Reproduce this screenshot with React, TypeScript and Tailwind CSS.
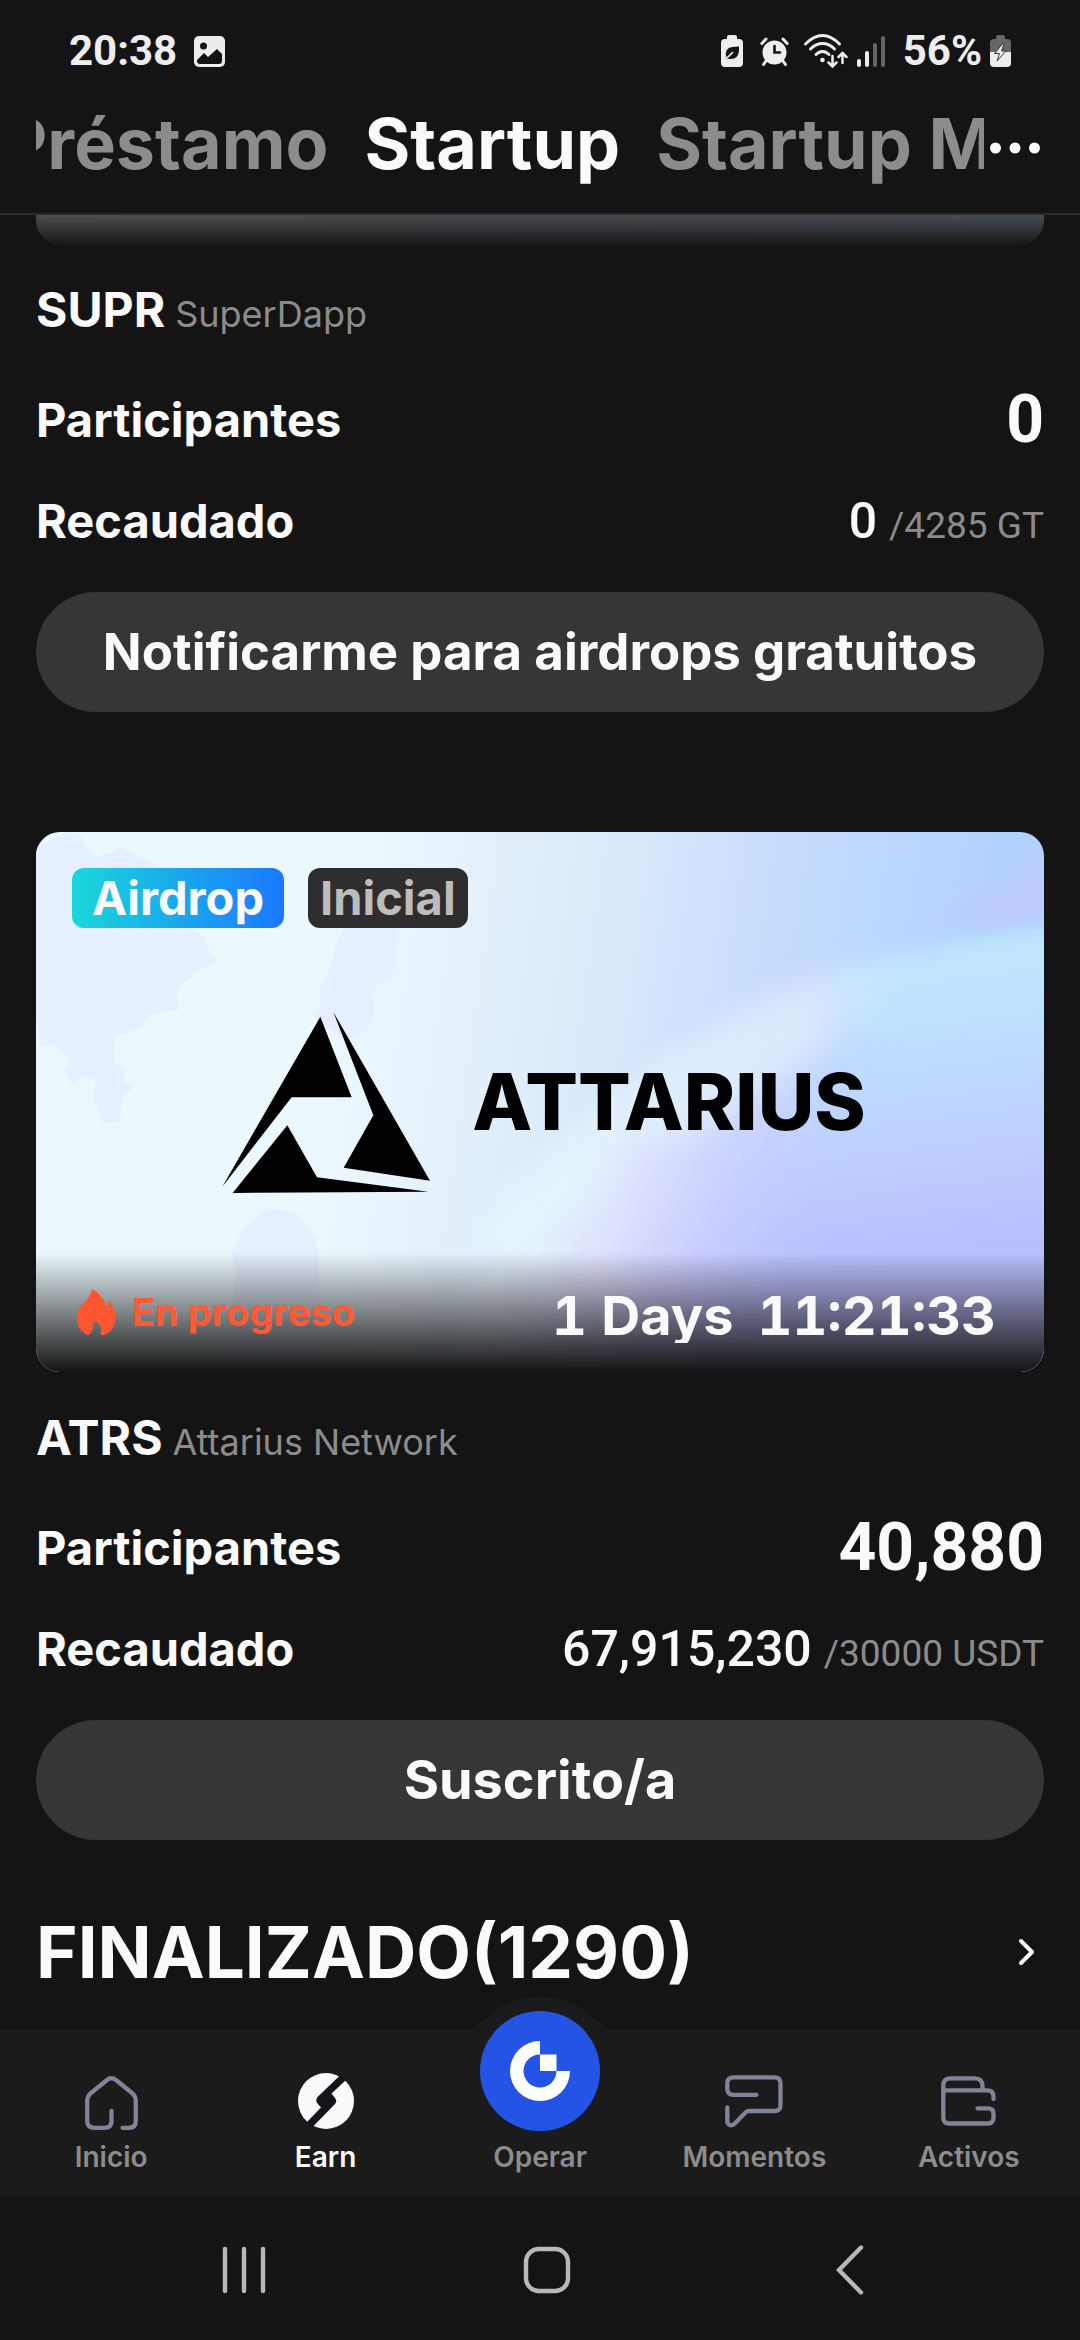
import React from "react";

function StatusBar() {
  return (
    <div className="flex h-[102px] items-center justify-between pl-[69px] pr-[69px] text-[#ededed]">
      <div className="flex items-center gap-[17px]">
        <span className="font-['Roboto',sans-serif] text-[42px] leading-[48px] font-bold">20:38</span>
        <svg width="31" height="31" viewBox="0 0 31 31" aria-hidden="true">
          <rect width="31" height="31" rx="5" fill="#ededed" />
          <circle cx="9.500" cy="10" r="3.500" fill="#141414" />
          <path d="M3 24 10 17 14 21 23 13 28 18V25Q28 28 25 28H6Q3 28 3 25Z" fill="#141414" />
        </svg>
      </div>
      <div className="flex items-center">
        <svg width="22" height="32" viewBox="0 0 22 32" aria-hidden="true">
          <path d="M6 4V2Q6 0 8 0H14Q16 0 16 2V4H18Q22 4 22 8V28Q22 32 18 32H4Q0 32 0 28V8Q0 4 4 4Z" fill="#ededed" />
          <path d="M5 22Q3.500 13 11 12L18 11.500V16Q17 24 10 24Q7 24 5.500 23L3 25" fill="#141414" />
          <path d="M3 24Q8 22 12 17" stroke="#ededed" strokeWidth="1.600" fill="none" />
        </svg>
        <svg className="ml-[17px]" width="29" height="29" viewBox="0 0 29 29" fill="none" stroke="#ededed" strokeWidth="3" strokeLinecap="round" aria-hidden="true">
          <circle cx="14.500" cy="15.500" r="12" fill="#ededed" stroke="none" />
          <path d="M1.800 6.500 6 2M27.200 6.500 23 2M6 24 3.500 27.500M23 24 25.500 27.500" />
          <path d="M14.500 9V15.500H20" stroke="#141414" strokeWidth="2.600" />
        </svg>
        <svg className="ml-[15px]" width="44" height="34" viewBox="0 0 44 34" fill="none" stroke="#ededed" strokeWidth="2.900" strokeLinecap="round" aria-hidden="true">
          <path d="M1.500 10Q10 1.500 18.500 1.500T35.500 10M6.500 15Q12 9.500 18.500 9.500T30.500 15M12 20.500Q15 17.500 18.500 17.500T25 20.500" />
          <circle cx="18.500" cy="26" r="2.300" fill="#ededed" stroke="none" />
          <path d="M28.500 22V32M24.500 28.500 28.500 32.500 32.500 28.500M38.500 29V20M34.500 23 38.500 19 42.500 23" strokeWidth="2.500" />
        </svg>
        <svg className="ml-[9px]" width="28" height="31" viewBox="0 0 28 31" aria-hidden="true">
          <rect x="0" y="23" width="4" height="8" rx="2" fill="#ededed" />
          <rect x="8" y="15" width="4" height="16" rx="2" fill="#ededed" />
          <rect x="16" y="7" width="4" height="24" rx="2" fill="#666666" />
          <rect x="24" y="0" width="4" height="31" rx="2" fill="#666666" />
        </svg>
        <span className="ml-[18px] font-['Roboto',sans-serif] text-[42px] leading-[48px] font-bold">56%</span>
        <svg className="ml-[8px]" width="21" height="32" viewBox="0 0 21 32" aria-hidden="true">
          <path d="M6 4V2Q6 0 8 0H13Q15 0 15 2V4H17Q21 4 21 8V17H0V8Q0 4 4 4Z" fill="#666666" />
          <path d="M0 17H21V28Q21 32 17 32H4Q0 32 0 28Z" fill="#ededed" />
          <path d="M12.500 9 4.500 18.500H9.500L7 26 16 16H11.500L14 9Z" fill="#ededed" stroke="#3a3a3a" strokeWidth="1" />
        </svg>
      </div>
    </div>
  );
}

function Header() {
  return (
    <header className="border-b-2 border-[#2a2a2b]">
      <StatusBar />
      <div className="flex h-[111px] pr-10 pl-9">
        <nav className="flex h-[84px] min-w-0 flex-1 items-center gap-9 overflow-hidden text-[70px] leading-[84px] font-bold whitespace-nowrap text-[#8c8c8c]">
          <a href="#prestamo" className="-ml-[34px]">Préstamo</a>
          <a href="#startup" aria-current="page" className="text-[#fafafa]">Startup</a>
          <a href="#startup-mining">Startup Mining</a>
        </nav>
        <button type="button" aria-label="Más" className="flex h-[84px] w-[56px] items-center justify-end pt-2">
          <svg width="50" height="12" viewBox="0 0 50 12" fill="#fafafa" aria-hidden="true">
            <circle cx="5.500" cy="6" r="5.500" />
            <circle cx="25" cy="6" r="5.500" />
            <circle cx="44.500" cy="6" r="5.500" />
          </svg>
        </button>
      </div>
    </header>
  );
}

function BannerArt() {
  return (
    <svg className="absolute inset-0 h-full w-full" viewBox="0 0 1008 540" preserveAspectRatio="none" aria-hidden="true">
      <defs>
        <linearGradient id="sky" gradientUnits="userSpaceOnUse" x1="290" y1="140" x2="930" y2="230">
          <stop offset="0" stopColor="#ebf8fd" />
          <stop offset="0.200" stopColor="#e6f2fb" />
          <stop offset="0.420" stopColor="#d9eafa" />
          <stop offset="0.620" stopColor="#cbdffd" />
          <stop offset="0.820" stopColor="#bdd8fe" />
          <stop offset="1" stopColor="#b1d2fd" />
        </linearGradient>
        <linearGradient id="sheet" gradientUnits="userSpaceOnUse" x1="820" y1="110" x2="860" y2="430">
          <stop offset="0" stopColor="#c0e6ff" />
          <stop offset="0.250" stopColor="#bfe3ff" />
          <stop offset="0.500" stopColor="#bdd7fe" />
          <stop offset="0.750" stopColor="#bccbfe" />
          <stop offset="1" stopColor="#babfff" />
        </linearGradient>
        <linearGradient id="sheen" gradientUnits="userSpaceOnUse" x1="520" y1="300" x2="780" y2="400">
          <stop offset="0" stopColor="#e6f2fd" />
          <stop offset="0.350" stopColor="#dfe3fd" stopOpacity="0.900" />
          <stop offset="0.650" stopColor="#d2d2fe" stopOpacity="0.600" />
          <stop offset="1" stopColor="#c5ccfe" stopOpacity="0" />
        </linearGradient>
        <linearGradient id="edge" gradientUnits="userSpaceOnUse" x1="600" y1="200" x2="880" y2="190">
          <stop offset="0" stopColor="#dfeffb" />
          <stop offset="0.600" stopColor="#dae9fc" />
          <stop offset="1" stopColor="#c8e4fe" stopOpacity="0" />
        </linearGradient>
        <filter id="soft" x="-10%" y="-10%" width="120%" height="120%">
          <feGaussianBlur stdDeviation="9" />
        </filter>
        <filter id="softer" x="-30%" y="-30%" width="160%" height="160%">
          <feGaussianBlur stdDeviation="14" />
        </filter>
      </defs>
      <rect width="1008" height="540" fill="url(#sky)" />
      <g fill="#e6effe">
        <path d="M0 15 14 9 33 0 44 3 50 14 60 24 72 22 84 15 98 22 115 30 135 60 152 92 168 105 172 118 183 130 165 137 146 152 140 165 143 178 126 180 112 185 104 196 81 204 77 218 79 230 90 238 88 250 97 255 86 266 84 289 67 291 62 275 57 267 60 248 50 244 36 252 28 240 34 228 29 222 18 212 5 215 0 185Z" />
        <path d="M312 90H362L360 120 358 141 336 159 338 176 334 196 312 207 292 196 276 182 284 176 284 156 295 133 300 112Z" />
        <path d="M232 376 260 381 281 407 288 540H191L200 440 196 420 208 396Z" />
      </g>
      <path d="M400 540 420 440Q440 390 504 330 570 270 650 215L600 350 560 540Z" fill="#e4f1fd" filter="url(#soft)" />
      <path d="M1040 10 1008 26 905 92 1040 96Z" fill="#bccbfe" filter="url(#soft)" />
      <g filter="url(#soft)">
        <path d="M1060 92Q800 112 640 225 510 320 430 470V600H1060Z" fill="url(#sheet)" />
        <path d="M780 132Q700 170 640 225 510 320 430 470V600H900V300Z" fill="url(#sheen)" />
      </g>
      <path d="M880 112Q740 150 620 240L560 295 640 305Q750 255 840 170Z" fill="url(#edge)" filter="url(#softer)" />
      <path d="M430 400Q500 330 600 270L560 360 480 440Z" fill="#e4f3fc" filter="url(#softer)" />
    </svg>
  );
}

function Flame() {
  return (
    <svg width="40" height="46" viewBox="0 0 40 46" fill="#ff5530" aria-hidden="true">
      <path d="M16 0Q26 5 31 18Q33 15 33 11Q39 19 39.500 28Q39.500 41 29 45.500Q25 46.500 24.500 45.500Q27 36 19 32Q16.500 34 17 39Q15.500 44 13 46Q8 45.500 3.500 39Q0 33 1 26Q3 18 10 12Q15 6 16 0Z" />
    </svg>
  );
}

function Banner() {
  return (
    <div className="relative h-[540px] overflow-hidden rounded-[24px]">
      <BannerArt />
      <div className="absolute inset-0 flex items-center justify-center gap-[42px] pl-2">
        <svg width="208" height="181" viewBox="64 38 622 543" aria-hidden="true">
          <path d="M358 52 452 294H272L64 562ZM397 38 687 544 428 505 517 348ZM259 378 348 534 682 577 95 581Z" />
        </svg>
        <span className="text-[78px] leading-[84px] font-extrabold text-black">ATTARIUS</span>
      </div>
      <div className="absolute inset-x-0 top-0 flex gap-6 p-9">
        <span className="rounded-[12px] bg-linear-to-r/srgb from-[#19d8da] to-[#1a78ff] px-5 text-[47px] leading-[60px] font-bold text-[#fafafa]">Airdrop</span>
        <span className="rounded-[12px] bg-[#2e2e2e] px-3 text-[47px] leading-[60px] font-bold text-[#bdbdbd]">Inicial</span>
      </div>
      <div className="absolute inset-x-0 bottom-0 flex h-[120px] items-center justify-between bg-linear-to-b from-transparent to-[#141414] pr-12 pl-10">
        <div className="flex items-center gap-4">
          <Flame />
          <span className="text-[38px] leading-[54px] font-bold text-[#ff5a36]">En progreso</span>
        </div>
        <div className="flex gap-6 pt-2 text-[54px] leading-[54px] font-bold text-[#fafafa] tabular-nums">
          <span className="overflow-hidden">1 Days</span>
          <span>11:21:33</span>
        </div>
      </div>
    </div>
  );
}

type ProjectProps = {
  symbol: string;
  name: string;
  participants: string;
  raised: string;
  goal: string;
  action: React.ReactNode;
};

function ProjectDetails({ symbol, name, participants, raised, goal, action }: ProjectProps) {
  return (
    <>
      <h2 className="mt-9 flex items-baseline gap-[10px] text-[48px] leading-[60px] font-bold">
        {symbol}
        <span className="text-[36px] leading-[40px] font-normal text-[#8c8c8c]">{name}</span>
      </h2>
      <dl className="flex flex-col">
        <div className="mt-[50px] flex h-[60px] items-center justify-between">
          <dt className="text-[47px] leading-[60px] font-bold">Participantes</dt>
          <dd className="font-['Roboto',sans-serif] text-[66px] leading-[60px] font-bold">{participants}</dd>
        </div>
        <div className="mt-[41px] flex items-baseline justify-between">
          <dt className="text-[47px] leading-[60px] font-bold">Recaudado</dt>
          <dd className="flex items-baseline gap-3 font-['Roboto',sans-serif] text-[50px] leading-[60px] font-medium">
            {raised}
            <span className="text-[37px] leading-[40px] font-normal text-[#8c8c8c]">{goal}</span>
          </dd>
        </div>
      </dl>
      {action}
    </>
  );
}

const pill = "mt-[41px] h-[120px] w-full rounded-full bg-[#353638] font-bold";

function NavItem({ label, active, children }: { label: string; active?: boolean; children: React.ReactNode }) {
  return (
    <a href={"#" + label.toLowerCase()} className={active ? "flex flex-col items-center pt-[41px] text-[#fafafa]" : "flex flex-col items-center pt-[41px] text-[#8c8c8c]"}>
      <span className="flex h-[60px] items-center justify-center">{children}</span>
      <span className="mt-2 text-[28px] leading-[36px] font-semibold">{label}</span>
    </a>
  );
}

const line = { fill: "none", stroke: "#7f8596", strokeWidth: 4.3, strokeLinecap: "round" as const, strokeLinejoin: "round" as const };

function BottomNav() {
  return (
    <nav className="grid h-[166px] grid-cols-5 items-start bg-[#1b1b1b] px-1">
      <NavItem label="Inicio">
        <svg className="mt-1" width="53" height="54" viewBox="0 0 53 54" {...line} aria-hidden="true">
          <path d="M26.500 35V45Q26.500 51.800 19.500 51.800H9.500Q2.200 51.800 2.200 45V25Q2.200 20 6 17L22 4Q26.500.600 31 4L47 17Q50.800 20 50.800 25V45Q50.800 51.800 44 51.800H37.500" />
        </svg>
      </NavItem>
      <NavItem label="Earn" active>
        <svg width="56" height="56" viewBox="0 0 56 56" aria-hidden="true">
          <circle cx="28" cy="28" r="28" fill="#fafafa" />
          <path d="M42 2.500 19.500 24Q17 27.500 19.500 30.500L23 34.500 9 49 14.500 54 37 31Q39.500 28 37 25L33.500 20.500 48 7Z" fill="#14141c" />
        </svg>
      </NavItem>
      <a href="#operar" className="relative -mt-[19px] flex flex-col items-center text-[#8c8c8c]">
        <svg className="absolute -top-[14px]" width="160" height="34" viewBox="0 0 160 34" fill="#1b1b1b" aria-hidden="true">
          <path d="M0 33C10 33 16 30 22 25 28 20 33 15 39 11 50 3 64 0 80 0S110 3 121 11C127 15 132 20 138 25 144 30 150 33 160 33V34H0Z" />
        </svg>
        <span className="relative flex h-[120px] w-[120px] items-center justify-center rounded-full bg-[#2354e6]">
          <svg width="60" height="60" viewBox="0 0 60 60" fill="#ffffff" aria-hidden="true">
            <path d="M30 0A30 30 0 1 0 60 30H46.500A16.500 16.500 0 1 1 30 13.500Z" />
            <path d="M30 13.500H46.500V30H30Z" />
          </svg>
        </span>
        <span className="mt-2 text-[28px] leading-[36px] font-semibold">Operar</span>
      </a>
      <NavItem label="Momentos">
        <svg width="58" height="53" viewBox="0 0 58 53" {...line} aria-hidden="true">
          <path d="M31.500 19.800H8.500Q2.300 19.800 2.300 14V8.500Q2.300 2.300 8.500 2.300H49.500Q55.500 2.300 55.500 8.500V30Q55.500 36 49.500 36H24Q22 36 20.500 37.500L9.500 48.700Q6.500 51.500 4 49.500 2.300 48.500 2.300 46V32.500" />
        </svg>
      </NavItem>
      <NavItem label="Activos">
        <svg width="55" height="50" viewBox="0 0 55 50" {...line} aria-hidden="true">
          <path d="M52.500 23V20.500Q52.500 14.300 46 14.300H2.500M41.500 14.300V10Q41.500 2.300 34 2.300H9.500Q2.300 2.300 2.300 9.500V41.500Q2.300 47.500 8.500 47.500H46.500Q52.500 47.500 52.500 41.500V37.500Q52.500 32.300 47 32.300H36.500" />
        </svg>
      </NavItem>
    </nav>
  );
}

function SystemNav() {
  const stroke = { fill: "none", stroke: "#b8b8b8", strokeWidth: 4.4, strokeLinecap: "round" as const };
  return (
    <div className="flex h-[144px] items-center justify-between pt-[4px] pr-[196px] pl-[210px]">
      <button type="button" aria-label="Recientes" className="flex w-[68px] justify-center">
        <svg width="44" height="48" viewBox="0 0 44 48" {...stroke} aria-hidden="true">
          <path d="M3 3V45M22 3V45M41 3V45" />
        </svg>
      </button>
      <button type="button" aria-label="Inicio del sistema" className="flex w-[68px] justify-center">
        <svg width="48" height="48" viewBox="0 0 48 48" {...stroke} aria-hidden="true">
          <rect x="3" y="3" width="42" height="42" rx="13" />
        </svg>
      </button>
      <button type="button" aria-label="Atrás" className="flex w-[68px] justify-center">
        <svg width="28" height="50" viewBox="0 0 28 50" {...stroke} aria-hidden="true">
          <path d="M25 2.500 3 25 25 47.500" />
        </svg>
      </button>
    </div>
  );
}

export default function App() {
  return (
    <div className="flex min-h-screen flex-col overflow-x-hidden bg-[#141414] font-['Inter',sans-serif] text-[#fafafa]">
      <Header />
      <main className="flex-1 px-9">
        <section>
          <div className="h-[29px] overflow-hidden rounded-b-[24px] bg-linear-to-r from-[#4d4d50] via-[#4b4950] to-[#454e54]">
            <div className="h-full bg-linear-to-b from-transparent to-[#141414]/90" />
          </div>
          <ProjectDetails
            symbol="SUPR"
            name="SuperDapp"
            participants="0"
            raised="0"
            goal="/4285 GT"
            action={<button type="button" className={pill + " text-[51px] leading-[60px]"}>Notificarme para airdrops gratuitos</button>}
          />
        </section>
        <section className="mt-[120px]">
          <Banner />
          <ProjectDetails
            symbol="ATRS"
            name="Attarius Network"
            participants="40,880"
            raised="67,915,230"
            goal="/30000 USDT"
            action={<button type="button" className={pill + " text-[54px] leading-[60px]"}>Suscrito/a</button>}
          />
        </section>
        <a href="#finalizado" className="mt-[70px] flex items-center justify-between pr-[8px]">
          <h2 className="text-[71px] leading-[84px] font-bold">FINALIZADO(1290)</h2>
          <svg width="18" height="28" viewBox="0 0 18 28" fill="none" stroke="#fafafa" strokeWidth="4" strokeLinecap="round" strokeLinejoin="round" aria-hidden="true">
            <path d="M3 3 14 14 3 25" />
          </svg>
        </a>
      </main>
      <BottomNav />
      <SystemNav />
    </div>
  );
}
